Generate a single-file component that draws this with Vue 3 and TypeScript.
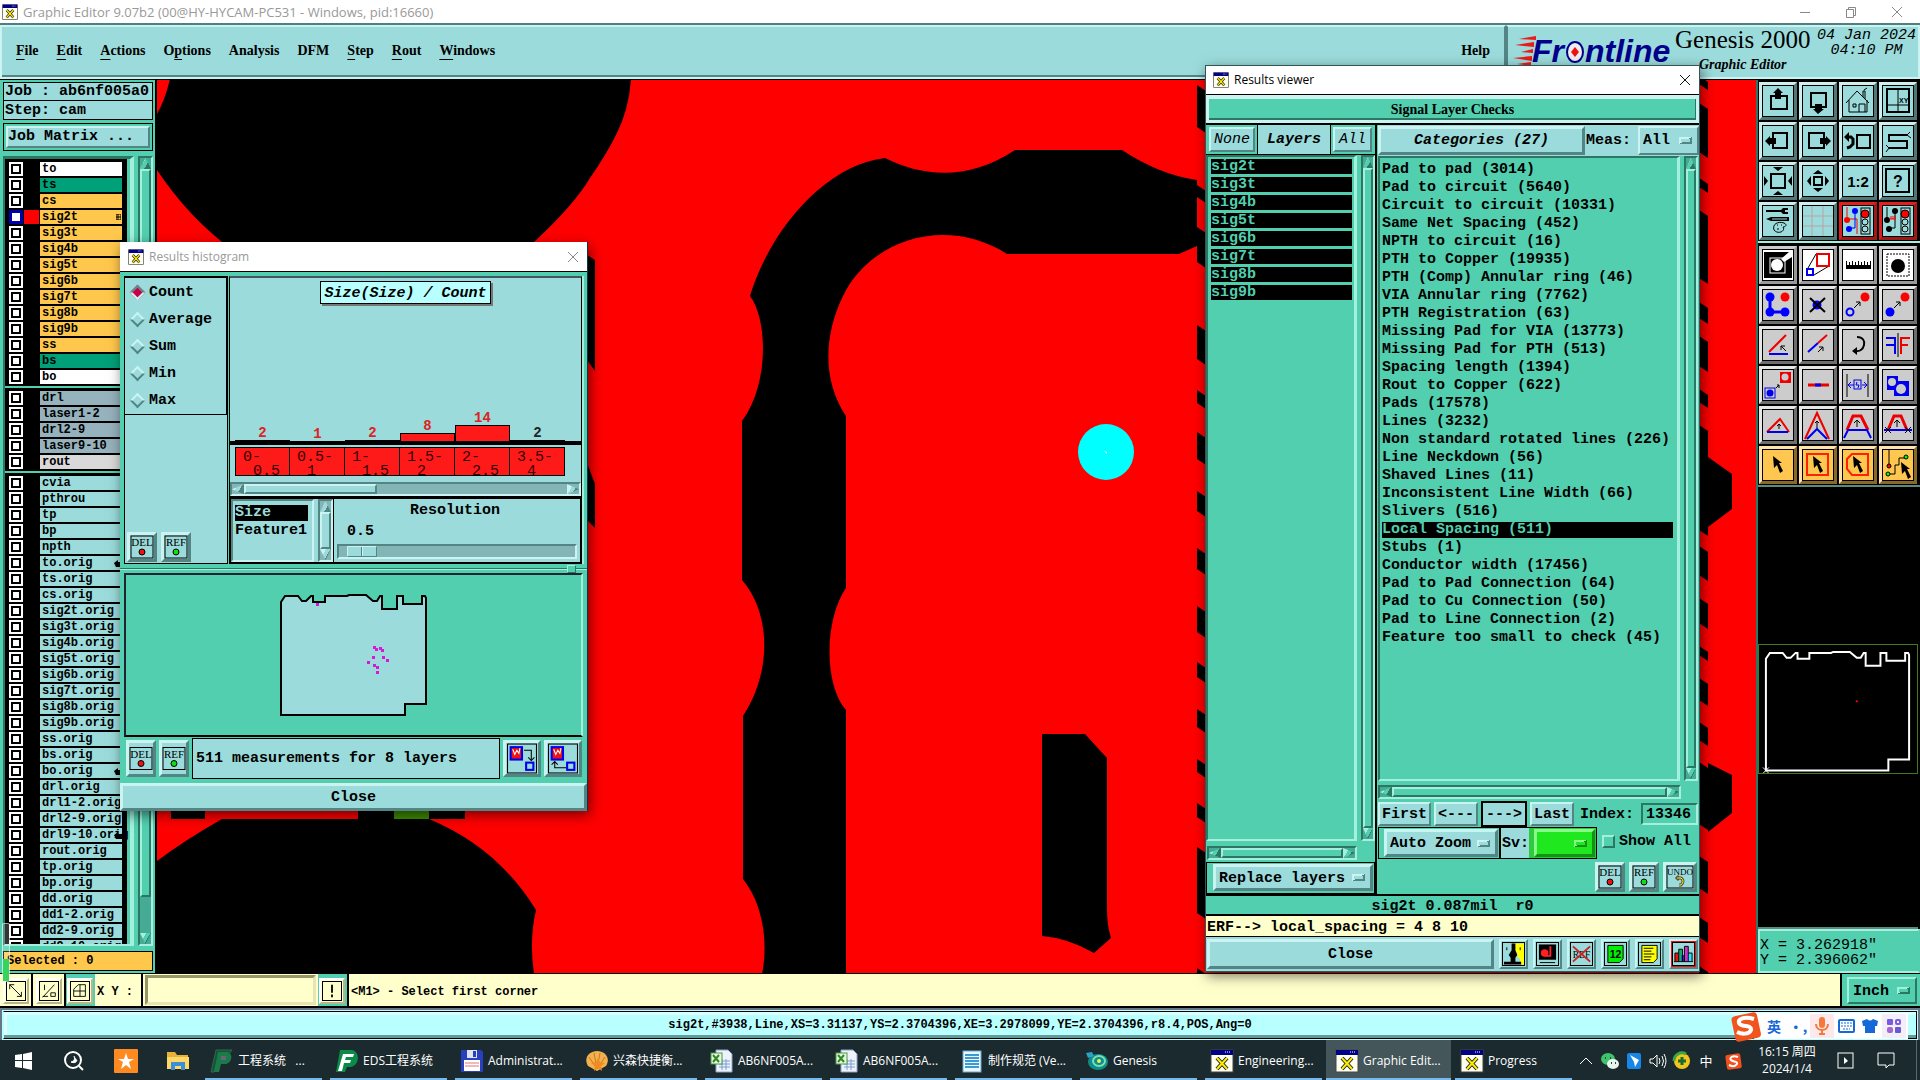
<script setup lang="ts">
import { ref } from 'vue'

interface Layer { name: string; kind: string }
interface Tool { label: string; tone: string; art: string }
interface Task { label: string; icon: string; active?: boolean }

const menus: [string, string, string][] = [
  ['', 'F', 'ile'], ['', 'E', 'dit'], ['', 'A', 'ctions'], ['O', 'p', 'tions'],
  ['Analysis', '', ''], ['DFM', '', ''], ['', 'S', 'tep'], ['', 'R', 'out'], ['', 'W', 'indows'],
]

const layer = (kind: string, names: string): Layer[] => names.split(' ').map(name => ({ name, kind }))
const groups: Layer[][] = [
  [
    ...layer('silk', 'to'), ...layer('mask', 'ts'), ...layer('sig', 'cs sig2t sig3t sig4b sig5t sig6b sig7t sig8b sig9b ss'),
    ...layer('mask', 'bs'), ...layer('silk', 'bo'),
  ],
  [...layer('drill', 'drl laser1-2 drl2-9 laser9-10'), ...layer('rout', 'rout')],
  layer('misc', 'cvia pthrou tp bp npth to.orig ts.orig cs.orig sig2t.orig sig3t.orig sig4b.orig sig5t.orig sig6b.orig sig7t.orig sig8b.orig sig9b.orig ss.orig bs.orig bo.orig drl.orig drl1-2.orig drl2-9.orig drl9-10.orig rout.orig tp.orig bp.orig dd.orig dd1-2.orig dd2-9.orig dd9-10.orig'),
]
const pointed = ['to.orig', 'bo.orig', 'drl9-10.orig']

const resultLayers = ['sig2t', 'sig3t', 'sig4b', 'sig5t', 'sig6b', 'sig7t', 'sig8b', 'sig9b']
const categories = [
  'Pad to pad (3014)', 'Pad to circuit (5640)', 'Circuit to circuit (10331)', 'Same Net Spacing (452)', 'NPTH to circuit (16)',
  'PTH to Copper (19935)', 'PTH (Comp) Annular ring (46)', 'VIA Annular ring (7762)', 'PTH Registration (63)',
  'Missing Pad for VIA (13773)', 'Missing Pad for PTH (513)', 'Spacing length (1394)', 'Rout to Copper (622)', 'Pads (17578)',
  'Lines (3232)', 'Non standard rotated lines (226)', 'Line Neckdown (56)', 'Shaved Lines (11)', 'Inconsistent Line Width (66)',
  'Slivers (516)', 'Local Spacing (511)', 'Stubs (1)', 'Conductor width (17456)', 'Pad to Pad Connection (64)',
  'Pad to Cu Connection (50)', 'Pad to Line Connection (2)', 'Feature too small to check (45)',
]
const category = ref('Local Spacing (511)')
const measurement = 'sig2t 0.087mil  r0'

const modes = ['Count', 'Average', 'Sum', 'Min', 'Max']
const mode = ref('Count')
const bins = [
  { from: '0-', to: '0.5', n: 2, h: 1 }, { from: '0.5-', to: '1', n: 1, h: 0 }, { from: '1-', to: '1.5', n: 2, h: 1 },
  { from: '1.5-', to: '2', n: 8, h: 8 }, { from: '2-', to: '2.5', n: 14, h: 16 }, { from: '3.5-', to: '4', n: 2, h: 1, dark: true },
]
const resolution = ref(0)
const index = ref('13346')
const coords = ref('')
const showAll = ref(false)

const board = 'M1 8L5 2H18L22 7H26L31 2H33V8H45V2H67L69 1H86L93 7H97L100 2H102V15H117V2H123V10H142V2H145L146 4V110H125V121H1Z'
const spots = [[37, 10], [94, 53], [96, 55], [100, 54], [102, 56], [93, 63], [103, 63], [107, 66], [88, 68], [94, 71], [97, 73], [97, 78]]

const notch = (x: number, w: number, a: number, b: number) => `M${x} ${a}L${x + w} ${a + 6}V${b + 6}L${x} ${b}Z`
const leftNotches = [[85, 127], [185, 197], [227, 262], [325, 359], [390, 403], [432, 459], [491, 511], [548, 569], [606, 632], [662, 677], [709, 727], [759, 772], [803, 817], [847, 913], [968, 974]]
  .map(([a, b]) => notch(1197, 9, a, b)).join('')
const rightNotches = [[76, 84], [103, 152], [178, 187], [210, 278], [302, 318], [336, 366], [389, 402], [425, 530], [546, 575], [598, 623], [646, 655], [678, 700], [722, 740], [762, 824], [856, 888], [917, 937], [966, 974]]
  .map(([a, b]) => notch(1699, 9, a, b)).join('')

const light = '<rect x="18" y="2" width="9" height="26" fill="none" stroke="#000"/><circle cx="22" cy="8" r="4" fill="#f00" stroke="#000"/><circle cx="22" cy="16" r="3" fill="none" stroke="#000"/><circle cx="22" cy="23" r="3" fill="none" stroke="#000"/>'
const cursor = (x: number, y: number) => `<path transform="translate(${x} ${y})" d="M0 0L9 7H6L10 15L7 17L4 9L1 12Z"/>`
const tools: Tool[] = [
  { label: 'Pan up', tone: 'cy', art: '<rect x="8" y="10" width="16" height="13" fill="none" stroke="#000" stroke-width="2"/><path d="M15 2L20 7H18V13H12V7H10Z"/>' },
  { label: 'Pan down', tone: 'cy', art: '<rect x="8" y="7" width="15" height="14" fill="none" stroke="#000" stroke-width="2"/><path d="M15 28L10 23H12V18H19V23H21Z"/>' },
  { label: 'Home', tone: 'cy', art: '<path d="M3 17L14 5L26 17M6 14V26H24V14M20 11V5H22V13M21 4L24 2M16 26V18H22V26M10 18H13V21H10Z" fill="none" stroke="#000"/>' },
  { label: 'Window XY', tone: 'cy', art: '<rect x="4" y="3" width="22" height="23" fill="none" stroke="#000" stroke-width="2"/><path d="M15 3V26M4 19H26" stroke="#000"/><text x="16" y="17" font-size="7" font-family="Liberation Sans">XY</text>' },
  { label: 'Pan left', tone: 'cy', art: '<rect x="10" y="7" width="14" height="15" fill="none" stroke="#000" stroke-width="2"/><path d="M2 15L7 10V12H13V18H7V20Z"/>' },
  { label: 'Pan right', tone: 'cy', art: '<rect x="6" y="7" width="15" height="15" fill="none" stroke="#000" stroke-width="2"/><path d="M28 15L23 10V12H17V18H23V20Z"/>' },
  { label: 'Previous view', tone: 'cy', art: '<rect x="14" y="9" width="13" height="13" fill="none" stroke="#000" stroke-width="2"/><path d="M3 11H8L10 13V18L7 21L4 22" fill="none" stroke="#000" stroke-width="3"/><path d="M1 11L6 6V16Z"/>' },
  { label: 'Snake', tone: 'cy', art: '<path d="M24 9H6V15H24V22H6" fill="none" stroke="#000" stroke-width="2"/><path d="M24 9L27 6M24 9L28 12M6 22L3 19M6 22L3 26" stroke="#000"/>' },
  { label: 'Zoom out', tone: 'cy', art: '<rect x="8" y="8" width="14" height="14" fill="none" stroke="#000" stroke-width="2"/><path d="M10 1H20L15 5ZM10 29H20L15 25ZM1 10V20L5 15ZM29 10V20L25 15Z"/>' },
  { label: 'Zoom in', tone: 'cy', art: '<rect x="11" y="11" width="8" height="8" fill="none" stroke="#000" stroke-width="2"/><path d="M10 8H20L15 4ZM10 22H20L15 26ZM8 10V20L4 15ZM22 10V20L26 15Z"/>' },
  { label: 'Scale', tone: 'cy', art: '<text x="15" y="21" text-anchor="middle" font-size="15" font-weight="700" font-family="Liberation Sans">1:2</text>' },
  { label: 'Query', tone: 'cy', art: '<rect x="3" y="3" width="23" height="23" fill="none" stroke="#000" stroke-width="2"/><text x="15" y="21" text-anchor="middle" font-size="16" font-weight="700" font-family="Liberation Sans">?</text>' },
  { label: 'Setup', tone: 'cy', art: '<path d="M3 4H18L20 2H25V4H22V6H25V8H20L18 6H3ZM3 13L8 11H26V15H8Z" fill="#000"/><path d="M9 13H24" stroke="#9bdbdb"/><path d="M11 24C9 18 15 15 21 17C25 19 22 21 20 21C23 25 15 29 11 24Z" fill="none" stroke="#000"/><path d="M14 19H15M18 19H19M14 23H16" stroke="#000"/>' },
  { label: 'Grid', tone: 'cy', art: '<path d="M9 0V30M20 0V30M0 10H30M0 20H30" stroke="#b9a3a3"/>' },
  { label: 'Net highlight', tone: 'red', art: '<path d="M4 1V13H14V28" fill="none" stroke="#f00"/><circle cx="4" cy="14" r="3" fill="#f00"/><path d="M12 5V22H6" fill="none" stroke="#00f"/><circle cx="12" cy="5" r="3" fill="#00f"/><circle cx="6" cy="23" r="3" fill="#00f"/>' + light },
  { label: 'Net spacing', tone: 'red', art: '<path d="M4 1V14M12 5V22H6" fill="none" stroke="#000"/><circle cx="4" cy="14" r="3"/><circle cx="12" cy="5" r="3"/><circle cx="6" cy="23" r="3"/><path d="M6 13H13M8 10V13M10 10V13M12 10V13" stroke="#f00"/>' + light },
  { label: 'Feature fill', tone: 'wh', art: '<rect x="1" y="2" width="28" height="26"/><rect x="7" y="8" width="15" height="15" fill="none" stroke="#fff"/><circle cx="14" cy="15" r="6" fill="#fff"/><path d="M18 9L26 2H29V7L21 12Z" fill="#fff"/>' },
  { label: 'Area link', tone: 'wh', art: '<path d="M5 18L13 4M11 25L26 16" stroke="#000"/><rect x="14" y="4" width="12" height="12" fill="#fff" stroke="#e00" stroke-width="2"/><rect x="4" y="19" width="6" height="6" fill="#fff" stroke="#00e" stroke-width="2"/>' },
  { label: 'Measure', tone: 'wh', art: '<path d="M3 19V11H4V15H6V12H7V15H9V11H10V15H12V12H13V15H15V11H16V15H18V12H19V15H21V11H22V15H24V12H25V15H27V11H28V19Z"/>' },
  { label: 'Select pad', tone: 'wh', art: '<rect x="4" y="4" width="22" height="22" fill="none" stroke="#000" stroke-dasharray="2 1"/><circle cx="15" cy="16" r="7"/>' },
  { label: 'Add polyline', tone: 'gr', art: '<path d="M7 7V22H22" fill="none" stroke="#00f" stroke-width="3"/><circle cx="7" cy="7" r="4.500" fill="#00f"/><circle cx="7" cy="22" r="4.500" fill="#00f"/><circle cx="22" cy="22" r="4.500" fill="#00f"/><circle cx="22" cy="7" r="4.500" fill="#f00"/>' },
  { label: 'Delete', tone: 'gr', art: '<circle cx="14" cy="15" r="4.500" fill="#00f"/><path d="M7 8L22 22M22 8L7 22" stroke="#000" stroke-width="2"/>' },
  { label: 'Move', tone: 'gr', art: '<circle cx="22" cy="7" r="4.500" fill="#f00"/><circle cx="7" cy="22" r="3.500" fill="none" stroke="#00f" stroke-width="2"/><path d="M11 18L17 12M13 12H17V16" fill="none" stroke="#000"/>' },
  { label: 'Copy', tone: 'gr', art: '<circle cx="22" cy="7" r="4.500" fill="#f00"/><circle cx="7" cy="22" r="4.500" fill="#00f"/><path d="M11 18L17 12M13 12H17V16" fill="none" stroke="#000"/>' },
  { label: 'Angle', tone: 'gr', art: '<path d="M6 22L23 5" stroke="#e00" stroke-width="2"/><path d="M6 24H25" stroke="#00e" stroke-width="2"/><path d="M23 21L18 16M18 20V16H22" fill="none" stroke="#000"/>' },
  { label: 'Stretch', tone: 'gr', art: '<path d="M5 22L15 13" stroke="#00e" stroke-width="2"/><path d="M15 13L24 5" stroke="#e00" stroke-width="2"/><path d="M15 22L20 17M16 17H20V21" fill="none" stroke="#000"/>' },
  { label: 'Rotate', tone: 'gr', art: '<path d="M14 7C20 7 22 11 21 15C20 20 16 22 11 21" fill="none" stroke="#000" stroke-width="2"/><path d="M9 21L14 17V25Z"/>' },
  { label: 'Mirror', tone: 'gr', art: '<path d="M3 8H12V24M3 15H12" fill="none" stroke="#00e" stroke-width="2"/><path d="M27 8H18V24M18 15H25" fill="none" stroke="#e00" stroke-width="2"/><path d="M15 3V27" stroke="#000"/>' },
  { label: 'Substitute', tone: 'gr', art: '<rect x="17" y="2" width="11" height="11" fill="#e00"/><circle cx="22" cy="7" r="3.500" fill="#ccc"/><rect x="2" y="18" width="10" height="10" fill="none" stroke="#00e"/><circle cx="7" cy="23" r="3.500" fill="#00e"/><path d="M13 18L16 15M14 15H16V18" fill="none" stroke="#000"/>' },
  { label: 'Merge lines', tone: 'gr', art: '<path d="M5 15H26" stroke="#e00" stroke-width="3"/><path d="M12 15H18" stroke="#00e" stroke-width="3"/>' },
  { label: 'Gap', tone: 'gr', art: '<path d="M4 4V27M25 4V27" stroke="#000"/><path d="M5 15H11M19 15H24M8 12L5 15L8 18M21 12L24 15L21 18" fill="none" stroke="#00e"/><rect x="11" y="10" width="7" height="9" fill="none" stroke="#00e"/><path d="M14 12L13 15H16L15 18" fill="none" stroke="#00e"/>' },
  { label: 'Group', tone: 'gr', art: '<path d="M4 6H15V11H26V26H11V20H4Z" fill="#00e"/><circle cx="9" cy="12" r="4" fill="#ccc"/><circle cx="18" cy="19" r="5" fill="#ccc"/>' },
  { label: 'Triangle', tone: 'gr', art: '<path d="M4 22L17 9L26 22" fill="none" stroke="#e00" stroke-width="2"/><path d="M4 22H25" stroke="#00e" stroke-width="2"/><path d="M16 19V14M14 16L16 14L18 16" fill="none" stroke="#000"/>' },
  { label: 'Peak', tone: 'gr', art: '<path d="M2 29L14 3L26 29" fill="none" stroke="#e00" stroke-width="2"/><path d="M4 29L14 19L24 29" fill="none" stroke="#00e" stroke-width="2"/><path d="M14 18V11M12 13L14 11L16 13" fill="none" stroke="#000"/>' },
  { label: 'Trapezoid', tone: 'gr', art: '<path d="M4 20L10 6H18L25 20" fill="none" stroke="#e00" stroke-width="3"/><path d="M1 28L5 20H24L28 28" fill="none" stroke="#00e" stroke-width="2"/><path d="M14 17V10M11 13L14 10L17 13" fill="none" stroke="#000"/>' },
  { label: 'Trim', tone: 'gr', art: '<path d="M5 20L11 6H18L24 20" fill="none" stroke="#e00" stroke-width="3"/><path d="M1 20H29" stroke="#00e" stroke-width="2"/><path d="M14 17V10M11 13L14 10L17 13M2 17L8 23M8 17L2 23M22 17L28 23M28 17L22 23" fill="none" stroke="#000"/>' },
  { label: 'Select single', tone: 'or', art: cursor(10, 6) },
  { label: 'Select rectangle', tone: 'or', art: '<rect x="4" y="4" width="21" height="21" fill="none" stroke="#f20" stroke-width="2"/>' + cursor(10, 6) },
  { label: 'Select polygon', tone: 'or', art: '<path d="M9 4H25V25H9L4 19V9Z" fill="none" stroke="#f20" stroke-width="2"/>' + cursor(10, 6) },
  { label: 'Select net', tone: 'or', art: '<path d="M6 0V15M6 24H12V15H16V8H22" fill="none" stroke="#000"/><circle cx="6" cy="16" r="2" fill="#f00" stroke="#000"/><circle cx="5" cy="24" r="2" fill="#0f0" stroke="#000"/><circle cx="23" cy="7" r="2" fill="#0f0" stroke="#000"/>' + cursor(18, 12) },
]
const upperTools = tools.slice(0, 16)
const lowerTools = tools.slice(16)

const footTools = [
  { label: 'Profile', art: '<path d="M1 0H9V6L12 10L9 13V16H6V24H1Z" fill="#9bdbdb"/><path d="M12 0H22V22H18V16L15 14V10L12 8Z" fill="#ff0"/><path d="M9 0H13V7L15 12L13 15V19H19V22H1V19H8V15L6 12L9 7Z"/><path d="M4 4V7M18 4V7" stroke="#000"/>' },
  { label: 'Stop', art: '<rect x="2" y="1" width="18" height="16"/><circle cx="8" cy="10" r="4" fill="#f22"/><path d="M14 3V13H8" fill="none" stroke="#f22" stroke-width="2"/><path d="M3 20H19" stroke="#000"/>' },
  { label: 'No reference', art: '<text x="11" y="15" text-anchor="middle" font-size="10" font-weight="400" font-family="Liberation Serif">REF</text><path d="M2 3L20 19M20 3L2 19" stroke="#c22" stroke-width="2"/>' },
  { label: 'Numbers', art: '<path d="M3 2H19V16L15 20H3Z" fill="#0e0" stroke="#000"/><text x="11" y="15" text-anchor="middle" font-size="11" font-weight="700" font-family="Liberation Sans">12</text>' },
  { label: 'Notes', art: '<path d="M3 2H19V16L15 20H3Z" fill="#ff0" stroke="#000"/><path d="M5 5H15M5 8H13M5 11H16M5 14H13M5 17H12" stroke="#000"/>' },
  { label: 'Histogram', art: '<path d="M2 19V10H6V19Z" fill="#e11"/><path d="M6 19V6H10V19Z" fill="#1a6"/><path d="M9 19V12H13V19Z" fill="#22e"/><path d="M12 19V3H16V19Z" fill="#c3c"/><path d="M16 19V10H20V19Z" fill="#3df"/><path d="M1 19H21M2 19V10H6M6 19V6H10V19M12 19V3H16V19M16 10H20V19" stroke="#000" fill="none"/>' },
]

const xIcon = '<rect x="1" y="1" width="22" height="22" fill="#fffff0" stroke="#444"/><rect x="1" y="1" width="22" height="5" fill="#008"/><path d="M15 3H21" stroke="#fff" stroke-dasharray="1 1"/><path d="M7 9L17 20M17 9L7 20" stroke="#222" stroke-width="4"/><path d="M7 9L17 20M17 9L7 20" stroke="#fe0" stroke-width="2"/>'
const sheet = '<path d="M6 1H18L22 5V23H6Z" fill="#eef3fb" stroke="#8aa4cc"/><path d="M9 12H20M9 15H20M9 18H20M12 10V21M16 10V21" stroke="#7d9cd0"/><rect x="1" y="4" width="11" height="11" fill="#e8f5e4" stroke="#4a9a3c"/><path d="M3 6L9 13M9 6L3 13" stroke="#2f8a22" stroke-width="2"/>'
const tasks: Task[] = [
  { label: '工程系统   ...', icon: '<path d="M6 1H22L19 5H9L4 23H1Z" fill="#153" stroke="#365"/><path d="M8 3H17C24 4 22 15 15 15H11L9 23H4Z" fill="#1a7a4a"/><path d="M11 7H16V11H11Z" fill="#667"/>' },
  { label: 'EDS工程系统', icon: '<path d="M5 1H17C26 3 24 17 16 18H12L10 23H1Z" fill="#0c8a48"/><path d="M8 5H19L18 8H11L10 11H16L15 14H9L7 22H3Z" fill="#fff"/>' },
  { label: 'Administrat...', icon: '<path d="M1 1H21L23 3V23H1Z" fill="#2740c0"/><rect x="7" y="1" width="10" height="8" fill="#dfe3ee"/><rect x="13" y="2" width="3" height="6" fill="#2740c0"/><rect x="4" y="11" width="16" height="11" fill="#fff"/><path d="M5 14H19M5 17H19" stroke="#e57373"/>' },
  { label: '兴森快捷衡...', icon: '<path d="M12 22L3 17C-2 8 5 2 12 2C20 2 26 9 21 17Z" fill="#f3b04e"/><path d="M12 20L4 8M12 20L9 4M12 20L15 4M12 20L20 8" stroke="#c9781e"/><path d="M13 9L15 13L20 14L16 17L17 22L13 19L9 22L10 17L6 14L11 13Z" fill="#f08a24"/>' },
  { label: 'AB6NF005A...', icon: sheet },
  { label: 'AB6NF005A...', icon: sheet },
  { label: '制作规范 (Ve...', icon: '<rect x="3" y="2" width="18" height="21" fill="#e9f6fd" stroke="#6aa8cc"/><path d="M5 6H19M5 9H19M5 12H19M5 15H19M5 18H19" stroke="#3b9ad2" stroke-width="2"/>' },
  { label: 'Genesis', icon: '<ellipse cx="13" cy="13" rx="10" ry="8" fill="#0f8c8c"/><ellipse cx="14" cy="12" rx="6" ry="5" fill="none" stroke="#7be0b0" stroke-width="2"/><circle cx="14" cy="12" r="2" fill="#ee5"/><path d="M1 4L7 3L9 7L3 9Z" fill="#29a3c4"/>' },
  { label: 'Engineering...', icon: xIcon },
  { label: 'Graphic Edit...', icon: xIcon, active: true },
  { label: 'Progress', icon: xIcon },
]
</script>

<template>
  <div class="screen">
    <header class="titlebar">
      <svg class="appicon" viewBox="0 0 24 24" v-html="xIcon"></svg>
      <span class="grow">Graphic Editor 9.07b2 (00@HY-HYCAM-PC531 - Windows, pid:16660)</span>
      <button class="wbtn" aria-label="Minimize"><svg width="12" height="12" viewBox="0 0 12 12"><path d="M1 6.500H11" /></svg></button>
      <button class="wbtn" aria-label="Restore"><svg width="12" height="12" viewBox="0 0 12 12"><path d="M1.500 3.500H8.500V11.500H1.500ZM3.500 3.500V1.500H10.500V9.500H8.500" /></svg></button>
      <button class="wbtn" aria-label="Close"><svg width="12" height="12" viewBox="0 0 12 12"><path d="M1 1L11 11M11 1L1 11" /></svg></button>
    </header>

    <div class="topbar">
      <nav class="menubar">
        <button v-for="m in menus" :key="m.join('')" class="menu">{{ m[0] }}<u>{{ m[1] }}</u>{{ m[2] }}</button>
        <span class="grow"></span>
        <button class="menu">Help</button>
      </nav>
      <div class="brand">
        <svg class="logo" width="164" height="40" viewBox="0 0 164 40">
          <path d="M8 9L25 6V10ZM4 15L23 12V17ZM10 22L22 19V23ZM2 28L21 26V31ZM6 34L20 32V36Z" fill="#f01818" />
          <g fill="#00008b" font-family="Liberation Sans" font-size="32" font-weight="700" font-style="italic">
            <text x="21" y="32">Fr</text><text x="74" y="32">ntline</text>
          </g>
          <ellipse cx="64" cy="22" rx="8" ry="10" fill="#eee" stroke="#00008b" stroke-width="2" /><path d="M64 17L68 22L64 27L60 22Z" fill="#e11" />
        </svg>
        <div class="product"><div class="genesis">Genesis 2000</div><div class="editor">Graphic Editor</div></div>
        <div class="date">04 Jan 2024<br>04:10 PM</div>
      </div>
    </div>

    <main class="work">
      <aside class="left">
        <div class="cell">Job : ab6nf005a0</div>
        <div class="cell step">Step: cam</div>
        <div class="matrixbox"><button class="bv matrix">Job Matrix ...</button></div>
        <div class="layerarea">
          <div class="layerlist">
            <div v-for="(g, gi) in groups" :key="gi" class="group">
              <div v-for="l in g" :key="l.name" class="layer" :class="{ cur: l.name === 'sig2t' }">
                <i class="tick"></i><i class="swatch"></i>
                <span class="lname" :class="l.kind">{{ l.name }}</span>
                <svg v-if="pointed.includes(l.name)" class="hand" width="8" height="8" viewBox="0 0 8 8"><path d="M0 3L4 0V2H8V7H2Z" /></svg>
                <svg v-if="l.name === 'sig2t'" class="plus" width="5" height="6" viewBox="0 0 5 6"><path d="M0 0H5V6H0ZM2 0V6M0 3H5" fill="none" stroke="#000" /></svg>
              </div>
            </div>
          </div>
          <div class="vs lvs"><b class="au"></b><i class="th"></i><b class="ad"></b></div>
        </div>
        <div class="selected">Selected : 0</div>
        <div class="gauge"><i></i></div>
      </aside>

      <div class="canvas">
        <svg viewBox="157 80 1599 893" preserveAspectRatio="xMinYMin slice">
          <rect x="157" y="79" width="1800" height="1100" fill="#f00" />
          <path d="M170 79Q165 100 157 114V170Q185 212 222 242H534Q574 205 590 178Q606 155 616 135Q629 110 631 79Z" />
          <path d="M587 255L595 260V371L587 360ZM587 463L595 484V528L587 520Z" />
          <path d="M885 158C825 165 770 230 750 296C768 320 769 385 742 421V580C770 612 773 670 743 716V879C764 905 768 945 762 974H846V710C824 685 824 620 846 588V416C822 380 824 335 843 296C870 240 945 215 1007 254H1179L1197 246V180Q1160 175 1122 150H1015C970 180 925 178 885 158Z" />
          <circle cx="1106" cy="452" r="28" fill="#0ff" /><path d="M1104 451L1107 452V454Z" fill="#fff" />
          <path d="M1042 734H1085L1107 758V910Q1107 925 1111 938L1094 953Q1068 938 1042 936Z" />
          <path :d="leftNotches" /><path :d="rightNotches" />
          <path d="M1708 457L1732 474V509L1708 527ZM1708 763L1732 775V813L1708 832Z" />
          <path d="M171 811H205V819H171ZM358 811H465V819H358Z" /><path d="M394 811H429V819H394Z" fill="#3e8c00" />
          <path d="M157 861Q185 840 222 819H429C475 838 510 868 536 910Q529 940 534 974H157Z" />
        </svg>
      </div>

      <aside class="right">
        <div class="tools"><button v-for="t in upperTools" :key="t.label" class="tool" :class="t.tone" :aria-label="t.label"><svg viewBox="0 0 30 30" v-html="t.art"></svg></button></div>
        <div class="tools low"><button v-for="t in lowerTools" :key="t.label" class="tool" :class="t.tone" :aria-label="t.label"><svg viewBox="0 0 30 30" v-html="t.art"></svg></button></div>
        <div class="overview">
          <svg viewBox="0 0 160 130"><path :d="board" transform="translate(6 6)" fill="none" stroke="#fff" stroke-width="2" /><rect x="98" y="56" width="2" height="2" fill="#f00" /><path d="M4 124L10 130M10 124L4 130" stroke="#fff" /></svg>
        </div>
        <div class="xy">X = 3.262918"<br>Y = 2.396062"</div>
      </aside>
    </main>

    <div class="cmdbar">
      <button class="cmd" aria-label="Line"><svg viewBox="0 0 20 20"><path d="M3 3L16 16M3 8V3H8M16 11V16H11" /></svg></button>
      <button class="cmd" aria-label="Ratio"><svg viewBox="0 0 20 20"><path d="M3 17L16 3M5 3V9M3 16H9M12 12H17V16H12Z" /></svg></button>
      <button class="cmd teal" aria-label="Grid snap"><svg viewBox="0 0 20 20"><path d="M3 8L8 3H16V16H3ZM10 3V16M3 10H16" /></svg></button>
      <label class="xylabel" for="coords">X Y :</label>
      <input id="coords" v-model="coords" class="coords">
      <button class="cmd teal" aria-label="Execute"><svg viewBox="0 0 20 20"><path d="M10 3V12M10 14V17" stroke-width="2" /></svg></button>
      <span class="prompt grow">&lt;M1&gt; - Select first corner</span>
      <div class="unitbox"><select class="bv opt tealopt" aria-label="Units"><option>Inch</option></select></div>
    </div>

    <div class="status"><div>sig2t,#3938,Line,XS=3.31137,YS=2.3704396,XE=3.2978099,YE=2.3704396,r8.4,POS,Ang=0</div></div>

    <footer class="taskbar">
      <button class="tb" aria-label="Start"><svg width="18" height="18" viewBox="0 0 18 18" fill="#fff"><path d="M0 3L7 2V8H0ZM8 2L17 0V8H8ZM0 9H7V16L0 15ZM8 9H17V18L8 16Z" /></svg></button>
      <button class="tb" aria-label="Search"><svg width="22" height="22" viewBox="0 0 22 22" fill="none" stroke="#fff" stroke-width="2"><circle cx="10" cy="10" r="8" /><path d="M11 6Q13 11 8 12Q13 14 14 10" stroke-width="1" fill="#fff" /><path d="M16 16L20 20" /></svg></button>
      <button class="tb" aria-label="Favorites"><svg width="24" height="24" viewBox="0 0 24 24"><rect width="24" height="24" rx="1" fill="#ff8a22" /><path d="M12 4L14 10H20L15 13L17 20L12 16L7 20L9 13L4 10H10Z" fill="#fff" /></svg></button>
      <button class="tb" aria-label="Files"><svg width="24" height="20" viewBox="0 0 24 20"><path d="M1 1H9L11 4H22V18H1Z" fill="#e8b23a" /><path d="M1 6H23V18H1Z" fill="#ffd766" /><path d="M5 19V11H19V19H15V15H9V19Z" fill="#3a8fd6" /></svg></button>
      <div class="tasks">
        <button v-for="(t, i) in tasks" :key="i" class="task" :class="{ active: t.active }"><svg width="24" height="24" viewBox="0 0 24 24" v-html="t.icon"></svg><span>{{ t.label }}</span></button>
      </div>
      <div class="tray">
        <svg viewBox="0 0 20 20"><path d="M4 13L10 7L16 13" fill="none" stroke="#fff" /></svg>
        <svg viewBox="0 0 20 20"><ellipse cx="8" cy="8" rx="7" ry="6" fill="#3fc36b" /><ellipse cx="13" cy="13" rx="6" ry="5" fill="#e8f5ea" /><path d="M5 7H6M10 7H11M11 12H12M15 12H16" stroke="#245" stroke-width="2" /></svg>
        <svg viewBox="0 0 20 20"><rect x="3" y="2" width="14" height="16" rx="2" fill="#1687e8" /><path d="M6 4L15 9L11 16L10 11Z" fill="#fff" /></svg>
        <svg viewBox="0 0 20 20"><path d="M2 8H5L9 4V16L5 12H2ZM11 7Q13 10 11 13M14 5Q17 10 14 15M16 3Q20 10 16 17" fill="none" stroke="#fff" /></svg>
        <svg viewBox="0 0 20 20"><circle cx="10" cy="10" r="8" fill="#f4c51c" /><path d="M2 10A8 8 0 0 1 14 3" fill="none" stroke="#3aa64a" stroke-width="3" /><path d="M10 6V14M6 10H14" stroke="#176b2c" stroke-width="3" /></svg>
        <span class="ime">中</span>
        <svg class="sg" viewBox="0 0 20 20"><rect x="2" y="3" width="15" height="15" rx="2" fill="#f2501e" transform="rotate(-8 10 10)" /><path d="M14 6C8 4 5 7 7 9C9 11 14 10 13 13C11 16 7 15 5 14" fill="none" stroke="#fff" stroke-width="2" /></svg>
      </div>
      <div class="clock">16:15 周四<br>2024/1/4</div>
      <svg class="tico" viewBox="0 0 20 20"><rect x="2" y="3" width="15" height="15" fill="none" stroke="#fff" /><path d="M8 7L12 11L8 14Z" fill="#fff" /></svg>
      <svg class="tico" viewBox="0 0 20 20"><path d="M2 3H18V15H13L10 18V15H2Z" fill="none" stroke="#fff" /></svg>
      <i class="edge"></i>
    </footer>

    <div class="sogou">
      <svg width="32" height="32" viewBox="0 0 32 32"><rect x="3" y="4" width="26" height="26" rx="4" fill="#f2541f" transform="rotate(-12 16 16)" /><path d="M24 9C14 6 8 9 9 13C11 18 22 14 21 20C19 25 11 24 7 22" fill="none" stroke="#fff" stroke-width="4" /></svg>
      <span>英</span><span>•,</span>
      <svg width="24" height="24" viewBox="0 0 24 24"><rect width="24" height="24" fill="#fde9ec" /><rect x="9" y="3" width="6" height="11" rx="3" fill="#f47a3c" /><path d="M6 10C6 18 18 18 18 10M12 16V20M9 20H15" fill="none" stroke="#f47a3c" stroke-width="2" /></svg>
      <svg width="24" height="24" viewBox="0 0 24 24"><rect x="5" y="6" width="15" height="12" rx="1" fill="none" stroke="#1468d8" stroke-width="2" /><path d="M7 9H18M7 12H18M9 15H16" stroke="#1468d8" stroke-dasharray="2 1" /></svg>
      <svg width="24" height="24" viewBox="0 0 24 24"><path d="M4 7L9 5Q12 8 15 5L20 7L19 12H17V19H7V12H5Z" fill="#1468d8" /></svg>
      <svg width="24" height="24" viewBox="0 0 24 24"><rect width="24" height="24" fill="#f3eef8" /><rect x="5" y="5" width="6" height="6" rx="1" fill="#7a5ae0" /><rect x="14" y="6" width="4" height="4" rx="1" fill="none" stroke="#7a5ae0" stroke-width="2" /><rect x="5" y="13" width="6" height="6" rx="2" fill="#a06ad0" /><rect x="13" y="13" width="6" height="6" rx="1" fill="#6a5ad0" /></svg>
    </div>

    <section class="win hist">
      <header class="wtitle dim"><svg class="appicon" viewBox="0 0 24 24" v-html="xIcon"></svg><span class="grow">Results histogram</span><button class="wx" aria-label="Close window"><svg width="12" height="12" viewBox="0 0 12 12"><path d="M1 1L11 11M11 1L1 11" /></svg></button></header>
      <div class="hbody">
        <div class="hleft">
          <div class="radios">
            <label v-for="m in modes" :key="m"><input v-model="mode" type="radio" name="mode" :value="m">{{ m }}</label>
          </div>
          <span class="grow"></span>
          <div class="pair">
            <button class="bv sm" aria-label="DEL"><svg viewBox="0 0 24 24"><rect x="1" y="1" width="22" height="22" /><text x="12" y="11">DEL</text><circle cx="12" cy="17" r="3" fill="#e11" /></svg></button>
            <button class="bv sm" aria-label="REF"><svg viewBox="0 0 24 24"><rect x="1" y="1" width="22" height="22" /><text x="12" y="11">REF</text><circle cx="12" cy="17" r="3" fill="#1d1" /></svg></button>
          </div>
        </div>
        <div class="hright">
          <div class="chart">
            <div class="ctitle">Size(Size) / Count</div>
            <span class="grow"></span>
            <div class="bars">
              <div v-for="b in bins" :key="b.from" class="bar" :class="{ dk: b.dark }"><span>{{ b.n }}</span><i :class="{ flat: b.h < 2 }" :style="{ height: b.h + 'px' }"></i></div>
            </div>
            <div class="bins"><div v-for="b in bins" :key="b.from">{{ b.from }}<br><span>{{ b.to }}</span></div></div>
            <div class="hs hhs"><b class="al"></b><i class="th"></i><b class="ar"></b></div>
          </div>
          <div class="hlow">
            <ul class="flist"><li class="on">Size</li><li>Feature1</li></ul>
            <div class="vs cyv"><b class="au"></b><i class="th"></i><b class="ad"></b></div>
            <div class="res">
              <label for="res">Resolution</label><output>0.5</output>
              <input id="res" v-model="resolution" type="range" min="0" max="100">
            </div>
          </div>
        </div>
      </div>
      <div class="sash"><i></i></div>
      <div class="map"><svg width="148" height="124" viewBox="0 0 148 124"><path :d="board" fill="#9bdbdb" stroke="#000" stroke-width="2" /><rect v-for="(s, i) in spots" :key="i" :x="s[0] - 1" :y="s[1] - 1" width="3" height="3" fill="#d818d8" /></svg></div>
      <div class="mrow">
        <button class="bv sm" aria-label="DEL"><svg viewBox="0 0 24 24"><rect x="1" y="1" width="22" height="22" /><text x="12" y="11">DEL</text><circle cx="12" cy="17" r="3" fill="#e11" /></svg></button>
        <button class="bv sm" aria-label="REF"><svg viewBox="0 0 24 24"><rect x="1" y="1" width="22" height="22" /><text x="12" y="11">REF</text><circle cx="12" cy="17" r="3" fill="#1d1" /></svg></button>
        <div class="mtext">511 measurements for 8 layers</div>
        <button class="bv md" aria-label="Export"><svg viewBox="0 0 30 30"><rect x="1" y="1" width="28" height="28" /><rect x="4" y="4" width="11" height="12" fill="#e11" stroke="#00e" stroke-width="2" /><path d="M6 6L8 11L10 7L12 10L13 5" stroke="#fff" fill="none" /><path d="M17 7H24V16M21 14L24 17L27 14" fill="none" stroke="#000" /><rect x="19" y="19" width="7" height="7" fill="none" stroke="#00e" stroke-width="2" /></svg></button>
        <button class="bv md" aria-label="Import"><svg viewBox="0 0 30 30"><rect x="1" y="1" width="28" height="28" /><rect x="4" y="4" width="11" height="12" fill="#e11" stroke="#00e" stroke-width="2" /><path d="M6 6L8 11L10 7L12 10L13 5" stroke="#fff" fill="none" /><path d="M18 24H7V18M4 21L7 18L10 21" fill="none" stroke="#000" /><rect x="19" y="19" width="7" height="7" fill="none" stroke="#00e" stroke-width="2" /></svg></button>
      </div>
      <button class="bv hclose">Close</button>
    </section>

    <section class="win viewer">
      <header class="wtitle"><svg class="appicon" viewBox="0 0 24 24" v-html="xIcon"></svg><span class="grow">Results viewer</span><button class="wx" aria-label="Close window"><svg width="12" height="12" viewBox="0 0 12 12"><path d="M1 1L11 11M11 1L1 11" /></svg></button></header>
      <div class="vhead">Signal Layer Checks</div>
      <div class="vcols">
        <div class="vl">
          <div class="vlh"><button class="bv it">None</button><div class="lay">Layers</div><button class="bv it">All</button></div>
          <div class="lists">
            <ul class="vlist"><li v-for="l in resultLayers" :key="l">{{ l }}</li></ul>
            <div class="vs"><b class="au"></b><i class="th"></i><b class="ad"></b></div>
          </div>
          <div class="hs lhs"><b class="al"></b><i class="th"></i><b class="ar"></b></div>
          <div class="repl"><select class="bv opt" aria-label="Layer action"><option>Replace layers</option></select></div>
        </div>
        <div class="vr">
          <div class="vrh"><button class="bv cat">Categories (27)</button><label for="meas">Meas:</label><select id="meas" class="bv opt meas"><option>All</option></select></div>
          <div class="lists rl">
            <ul class="clist"><li v-for="c in categories" :key="c" :class="{ on: c === category }" @click="category = c">{{ c }}</li></ul>
            <div class="vs"><b class="au"></b><i class="th"></i><b class="ad"></b></div>
          </div>
          <div class="hs rhs"><b class="al"></b><i class="th"></i><b class="ar"></b></div>
          <div class="nav">
            <button class="bv">First</button><button class="bv">&lt;---</button><button class="bv def">---&gt;</button><button class="bv">Last</button>
            <label for="idx">Index:</label><input id="idx" v-model="index">
          </div>
          <div class="zoomrow">
            <div class="zbox"><select class="bv opt" aria-label="Zoom mode"><option>Auto Zoom</option></select></div>
            <label class="sv" for="sv">Sv:</label><div class="gbox"><select id="sv" class="bv opt green"><option></option></select></div>
            <label class="chk"><input v-model="showAll" type="checkbox">Show All</label>
          </div>
          <div class="acts">
            <button class="bv sm" aria-label="DEL"><svg viewBox="0 0 24 24"><rect x="1" y="1" width="22" height="22" /><text x="12" y="11">DEL</text><circle cx="12" cy="17" r="3" fill="#e11" /></svg></button>
            <button class="bv sm" aria-label="REF"><svg viewBox="0 0 24 24"><rect x="1" y="1" width="22" height="22" /><text x="12" y="11">REF</text><circle cx="12" cy="17" r="3" fill="#1d1" /></svg></button>
            <button class="bv sm undo" aria-label="UNDO"><svg viewBox="0 0 28 24"><rect x="1" y="1" width="26" height="22" /><text x="14" y="10">UNDO</text><path d="M11 13H15Q19 16 15 20H13M13 11L11 13L13 15" fill="none" stroke="#553" stroke-width="3" /><path d="M11 13H15Q19 16 15 20H13" fill="none" stroke="#fe3" /></svg></button>
          </div>
        </div>
      </div>
      <div class="meas-line">{{ measurement }}</div>
      <div class="erf">ERF--&gt; local_spacing = 4 8 10</div>
      <div class="vfoot">
        <button class="bv vclose">Close</button>
        <button v-for="f in footTools" :key="f.label" class="bv ft" :class="{ hot: f.label === 'Histogram' }" :aria-label="f.label"><svg viewBox="0 0 22 22" v-html="f.art"></svg></button>
      </div>
    </section>
  </div>
</template>

<style>
html, body { margin: 0; background: #000; overflow: hidden; }
</style>

<style scoped>
* { box-sizing: border-box; }
.screen {
  --cy: #9bdbdb; --cl: #caf3f2; --cd: #538585;
  --te: #52cfaf; --tl: #a4efdd; --td: #2c7763;
  position: relative; height: 100vh; min-height: 900px; display: flex; flex-direction: column; color: #000;
  font: 700 15px/18px "Liberation Mono", monospace; white-space: pre;
}
button, select, input { font: inherit; color: inherit; padding: 0; margin: 0; border: 0; border-radius: 0; background: none; appearance: none; outline: 0; }
ul { list-style: none; margin: 0; padding: 0; }
svg { display: block; }
.grow { flex: 1; }
.bv { background: var(--cy); border: 3px solid; border-color: var(--cl) var(--cd) var(--cd) var(--cl); white-space: pre; text-align: center; }
.opt {
  text-align: left; padding: 2px 20px 0 3px;
  background: linear-gradient(var(--cy), var(--cy)) right 7px center / 9px 3px no-repeat,
    linear-gradient(150deg, var(--cl) 50%, var(--cd) 50%) right 5px center / 13px 7px no-repeat, var(--cy);
}
.tealopt { --cy: #52cfaf; --cl: #a4efdd; --cd: #2c7763; }

.titlebar { height: 23px; display: flex; align-items: center; background: #fff; color: #999; font: 13px/16px "Open Sans", sans-serif; padding-left: 2px; }
.appicon { width: 16px; height: 16px; margin-right: 5px; }
.wbtn { width: 46px; height: 23px; display: flex; justify-content: center; align-items: center; }
.wbtn path { fill: none; stroke: #888; }

.topbar { height: 57px; display: flex; border-top: 2px solid #4f7f7f; border-bottom: 1px solid #000; }
.menubar { flex: 1; display: flex; align-items: center; background: var(--cy); border: 2px solid; border-color: var(--cl) var(--cd) var(--cl) var(--cl); padding: 0 14px 2px 14px; gap: 18px; box-shadow: inset 0 -2px var(--cd); }
.menu { font: 700 14px/18px "Liberation Serif", serif; }
.menu u { text-underline-offset: 4px; }
.brand { width: 414px; display: flex; align-items: flex-start; background: var(--cy); border: 2px solid; border-color: var(--cl) var(--cl) var(--cl) var(--cd); padding: 1px 2px 0 3px; }
.logo { margin-top: 2px; flex: none; }
.product { font-family: "Liberation Serif", serif; flex: 1; }
.genesis { font-size: 25px; line-height: 24px; font-weight: 400; }
.editor { font-size: 14px; line-height: 16px; font-style: italic; padding-left: 24px; margin-top: 5px; }
.date { font-style: italic; line-height: 15px; text-align: center; font-weight: 400; }

.work { flex: 1; min-height: 0; display: flex; background: #000; }
.left { width: 155px; margin-right: 2px; background: var(--te); display: flex; flex-direction: column; padding: 2px 2px 2px 3px; position: relative; }
.cell { border: 1px solid #000; background: var(--cy); height: 19px; line-height: 18px; padding-left: 1px; overflow: hidden; }
.step { border-top-width: 0; line-height: 20px; }
.matrixbox { border: 1px solid #000; margin-top: 3px; height: 28px; padding: 2px; display: flex; }
.matrix { flex: 1; text-align: left; border-width: 2px; }
.layerarea { flex: 1; min-height: 0; margin-top: 5px; display: flex; justify-content: space-between; }
.layerlist { width: 131px; overflow: hidden; border-style: solid; border-width: 3px 4px 2px 2px; border-color: var(--td) var(--tl) var(--tl) var(--td); padding-right: 3px; }
.group { background: #000; padding: 2px 5px 0 3px; margin-bottom: 2px; border-bottom: 1px solid #000; }
.layer { height: 16px; display: flex; align-items: center; position: relative; }
.tick { width: 14px; height: 14px; background: #fff; border: 2px solid #fff; box-shadow: inset 0 0 0 2px #000; flex: none; margin-left: 1px; }
.swatch { width: 15px; height: 14px; margin: 0 1px 0 1px; flex: none; }
.cur .tick { border-color: #00a; background: #fff; box-shadow: inset 0 0 0 1px #00a; }
.cur .swatch { background: #f00; }
.lname { flex: 1; min-width: 0; height: 14px; padding-left: 2px; font-size: 12px; line-height: 14px; }
.silk { background: #fff; } .mask { background: #00a078; } .sig { background: #ffc84c; }
.drill { background: #96b2bc; } .rout { background: #d9d9d9; } .misc { background: var(--cy); }
.hand, .plus { position: absolute; right: 1px; top: 5px; }
.hand { right: 0; }
.selected { border: 1px solid #000; background: #ffc84c; height: 20px; margin-top: 5px; line-height: 18px; padding-left: 3px; font-size: 12px; }
.gauge { position: absolute; left: 2px; bottom: -9px; width: 8px; height: 59px; border: 1px solid #ffffff88; background: #ffffff33; display: flex; align-items: flex-end; z-index: 2; border-radius: 2px; }
.gauge i { width: 6px; height: 22px; background: #35d55c; }

.vs, .hs { display: flex; background: #45ab94; border: 2px solid; border-color: var(--td) var(--tl) var(--tl) var(--td); flex: none; }
.vs { width: 15px; flex-direction: column; }
.hs { height: 14px; }
.th { flex: 1; background: var(--te); border: 2px solid; border-color: var(--tl) var(--td) var(--td) var(--tl); }
.vs b { height: 11px; } .hs b { width: 12px; }
.vs b, .hs b { flex: none; background: linear-gradient(120deg, var(--tl) 35%, var(--te) 36%, var(--te) 60%, var(--td) 61%); }
.au { clip-path: polygon(50% 0, 100% 100%, 0 100%); } .ad { clip-path: polygon(0 0, 100% 0, 50% 100%); }
.al { clip-path: polygon(0 50%, 100% 0, 100% 100%); } .ar { clip-path: polygon(0 0, 100% 50%, 0 100%); }
.lvs .ad { margin-top: 36px; }

.canvas { flex: 1; min-width: 0; position: relative; overflow: hidden; }
.canvas svg { position: absolute; width: 100%; height: 100%; }

.right { width: 164px; background: #000; border-left: 2px solid var(--td); display: flex; flex-direction: column; }
.tools { display: grid; grid-template-columns: repeat(4, 38px); gap: 2px; padding: 2px 2px 1px 1px; border: solid var(--td); border-width: 0; border-bottom: 2px solid var(--tl); }
.low { border-bottom-color: #5c8a80; padding-top: 3px; }
.tool { height: 38px; border: 3px solid; background: var(--c); border-color: #fff8 #0007 #0007 #fff8; padding: 0; display: flex; }
.tool svg { width: 32px; height: 32px; border: 1px solid #000; }
.cy { --c: #9bdbdb; } .wh { --c: #fff; border-color: #ccc #999 #999 #ccc; } .gr { --c: #ccc; } .or { --c: #ffc650; }
.red { --c: #9bdbdb; border-color: #e02020 #a01818 #a01818 #e02020; }
.overview { flex: 1; min-height: 0; display: flex; align-items: center; margin-right: 2px; padding-top: 4px; border-bottom: 2px solid #5c8a80; }
.overview svg { width: 100%; border: 1px solid #3f7a20; }
.xy { background: var(--te); border: 2px solid; border-color: var(--tl) var(--te) var(--tl) var(--tl); height: 44px; padding: 7px 0 0; line-height: 15px; font-weight: 400; }

.cmdbar { height: 34px; margin-top: 1px; display: flex; background: #ffffcc; border-bottom: 2px solid #000; }
.cmd { width: 33px; border-right: 2px solid #000; padding: 4px 3px 2px; }
.cmd svg { width: 26px; height: 26px; padding: 2px; background: #ffffcc; border: 2px solid; border-color: #fff #b8b48c #b8b48c #fff; outline: 1px solid #000; outline-offset: -4px; }
.cmd path { fill: none; stroke: #000; }
.teal { width: 29px; background: var(--te); padding: 3px 1px 1px; border-right: 0; }
.xylabel { width: 48px; padding: 2px 0 0 2px; line-height: 32px; font-size: 12px; border-right: 2px solid #000; }
.coords { width: 171px; margin: 1px 2px; border: 3px solid; border-color: #99956b #e8e4b4 #e8e4b4 #99956b; background: #ffffcc; }
.prompt { font-size: 12px; line-height: 32px; padding: 2px 0 0 2px; border-left: 2px solid #000; }
.unitbox { width: 80px; border-left: 2px solid #000; background: var(--te); padding: 3px 3px 2px 5px; display: flex; }
.unitbox select { flex: 1; border-width: 2px; padding-left: 4px; }

.status { height: 32px; background: #b8ffff; border: 2px solid #678; border-width: 2px 2px 0; padding: 1px; }
.status div { height: 28px; border: 1px solid #000; border-left-color: #b8ffff; text-align: center; font-size: 12px; line-height: 26px; box-shadow: inset 0 -3px #669a9a, inset 3px 3px #dcffff; }

.taskbar { height: 40px; background: #1b2a2e; display: flex; align-items: center; color: #fff; font: 12px/20px "Open Sans", "Noto Sans CJK SC", sans-serif; }
.tb { width: 52px; height: 40px; display: flex; justify-content: center; align-items: center; flex: none; padding-top: 2px; }
.tb:first-child { width: 48px; }
.tasks { flex: 1; display: flex; gap: 8px; min-width: 0; padding-left: 1px; }
.task { width: 117px; flex: none; height: 40px; border-bottom: 2px solid #76b9ed; display: flex; align-items: center; padding: 3px 0 0 5px; gap: 4px; }
.task svg { flex: none; }
.task.active { width: 125px; margin: 0 -4px; background: #44565a; padding-left: 9px; }
.tray { display: flex; align-items: center; gap: 4px; padding: 2px 12px 0 0; }
.tray svg, .tico { width: 20px; height: 20px; }
.ime { width: 20px; text-align: center; font-size: 13px; }
.sg { margin-left: 4px; }
.clock { width: 62px; text-align: center; line-height: 17px; font-size: 12px; margin-right: 18px; }
.tico { margin-right: 20px; }
.edge { width: 1px; height: 40px; background: #5a6668; margin-right: 3px; }
.sogou { position: absolute; right: 12px; bottom: 41px; height: 26px; width: 178px; display: flex; align-items: center; background: linear-gradient(90deg, transparent 24px, #fff 24px); color: #1468d8; font: 700 14px/24px "Noto Sans CJK SC", sans-serif; }
.sogou span { width: 24px; text-align: center; }

.win { position: absolute; display: flex; flex-direction: column; box-shadow: 2px 4px 12px #0008; background: var(--te); }
.wtitle { height: 30px; flex: none; background: #fff; display: flex; align-items: center; padding-left: 8px; font: 12px/16px "Open Sans", sans-serif; border-bottom: 1px solid #000; }
.dim { color: #999; }
.wx { width: 28px; height: 28px; display: flex; align-items: center; justify-content: center; }
.wx path { fill: none; stroke: #111; } .dim .wx path { stroke: #888; }

.hist { left: 120px; top: 242px; width: 468px; height: 569px; border-right: 1px solid #134; }
.hbody { display: flex; padding: 4px 5px 0 4px; height: 292px; gap: 1px; }
.hleft { width: 104px; background: var(--cy); border: 1px solid #000; border-top-width: 2px; display: flex; flex-direction: column; }
.radios { border-right: 1px solid #000; border-bottom: 1px solid #000; height: 137px; padding-top: 1px; }
.radios label { display: flex; align-items: center; height: 27px; padding-left: 7px; gap: 6px; }
.radios input { width: 11px; height: 11px; transform: rotate(45deg); border: 2px solid; border-color: var(--cl) var(--cd) var(--cd) var(--cl); }
.radios input:checked { background: #c8004a; border-color: #688 var(--cl) var(--cl) #688; }
.pair { display: flex; gap: 4px; padding: 0 0 1px 2px; }
.sm { width: 30px; height: 30px; flex: none; }
.sm svg, .md svg, .ft svg { width: 100%; height: 100%; }
.sm rect, .md rect:first-child { fill: none; stroke: #000; }
.sm text { font: 400 11px "Liberation Serif", serif; text-anchor: middle; }
.sm circle { stroke: #000; }
.hright { flex: 1; display: flex; flex-direction: column; }
.chart { height: 222px; background: var(--cy); border: 1px solid #000; border-top: 2px solid #456; display: flex; flex-direction: column; box-shadow: 2px 0 var(--tl); }
.ctitle { align-self: center; margin-top: 3px; border: 1px solid #000; background: #b8ffff; padding: 4px 3px 1px; font-style: italic; line-height: 16px; box-shadow: 2px 2px #777; }
.bars { display: flex; padding: 0 13px 0 5px; border-bottom: 4px solid #000; align-items: flex-end; }
.bar { width: 55px; text-align: center; color: #d22; font-size: 14px; line-height: 13px; font-weight: 700; }
.bar.dk { color: #222; }
.bar i { display: block; background: #ff1a1a; border: 1px solid #000; border-bottom: 0; }
.bar .flat { background: #000; border: 0; }
.bins { display: flex; margin: 2px 13px 6px 5px; }
.bins div { width: 55px; height: 29px; border: 1px solid #000; background: #ff1a1a; font-size: 15px; line-height: 14px; padding: 3px 0 0 7px; font-weight: 400; color: #300; }
.bins div + div { border-left: 0; }
.bins span { padding-left: 10px; }
.hhs, .cyv { --te: #9bdbdb; --tl: #caf3f2; --td: #538585; background: #83b5b7; }
.hhs .th { flex: 0 0 133px; } .hhs .ar { margin-left: auto; }
.hlow { height: 67px; border: 2px solid #000; background: var(--cy); display: flex; box-shadow: 2px 0 var(--tl); }
.flist { width: 83px; padding: 4px 2px; border: 2px solid; border-color: var(--cd) var(--cl) var(--cl) var(--cd); }
.flist li { height: 16px; line-height: 16px; margin-bottom: 2px; width: 73px; }
.on { background: #000; color: var(--te); }
.flist .on { color: var(--cy); }
.cyv { margin-left: 4px; }
.res { flex: 1; border-left: 1px solid #000; display: flex; flex-direction: column; padding: 3px 3px 0; }
.res label { text-align: center; line-height: 18px; padding-right: 4px; }
.res output { padding-left: 10px; line-height: 24px; }
.res input { height: 15px; background: #83b5b7; border: 2px solid; border-color: var(--cd) var(--cl) var(--cl) var(--cd); padding-left: 8px; }
.res input::-webkit-slider-thumb { appearance: none; width: 30px; height: 11px; background: linear-gradient(90deg, var(--cy) 46%, var(--cd) 46%, var(--cd) 50%, var(--cl) 50%, var(--cl) 54%, var(--cy) 54%); border: 1px solid; border-color: var(--cl) var(--cd) var(--cd) var(--cl); }
.sash { height: 9px; display: flex; justify-content: flex-end; align-items: center; padding-right: 11px; background: linear-gradient(#2c7763, #2c7763) 0 4px / 100% 1px no-repeat, linear-gradient(#a4efdd, #a4efdd) 0 5px / 100% 1px no-repeat; }
.sash i { width: 9px; height: 8px; background: var(--te); border: 1px solid; border-color: var(--tl) var(--td) var(--td) var(--tl); }
.map { height: 164px; margin: 0 4px; padding-top: 2px; border: 2px solid; border-color: #223 var(--tl) #000 #223; display: flex; justify-content: center; align-items: center; background: var(--te); }
.mrow { display: flex; height: 43px; padding: 0 5px 0 6px; gap: 3px; align-items: center; }
.mrow .sm { height: 37px; }
.mtext { flex: 1; height: 41px; line-height: 40px; background: var(--cy); border: 1px solid #000; padding-left: 3px; }
.md { width: 38px; height: 37px; flex: none; }
.hclose { margin-top: auto; height: 28px; padding-top: 2px; }

.viewer { left: 1205px; top: 65px; width: 495px; bottom: 108px; border: 1px solid #355; }
.viewer .wtitle { height: 29px; padding-left: 7px; }
.vhead { height: 28px; flex: none; background: var(--te); border: 3px solid #caf3f2; border-top-width: 4px; box-shadow: inset -1px -2px var(--td); text-align: center; font: 700 14px/22px "Liberation Serif", serif; }
.vcols { flex: 1; min-height: 0; display: flex; border-top: 2px solid #000; border-bottom: 2px solid #000; }
.vl { width: 171px; flex: none; border-right: 2px solid #000; display: flex; flex-direction: column; }
.vlh { display: flex; height: 30px; justify-content: space-between; border-bottom: 1px solid #000; padding: 0 3px; }
.it { width: 46px; margin: 2px 0; padding-top: 1px; font-style: italic; font-weight: 400; border-width: 2px; }
.it:last-child { width: 39px; }
.lay { flex: 1; margin: 0 2px; background: var(--cy); border: 1px solid #000; border-width: 0 1px; text-align: center; font-style: italic; line-height: 30px; }
.lists { flex: 1; min-height: 0; display: flex; justify-content: space-between; }
.vlist { flex: 1; border-style: solid; border-width: 2px 3px 2px 2px; border-color: var(--td) var(--tl) var(--tl) var(--td); margin-right: 4px; padding: 2px 2px 2px 3px; overflow: hidden; }
.vlist li { height: 15px; line-height: 15px; margin-bottom: 3px; background: #000; color: var(--te); }
.lists .vs { width: 14px; }
.lhs { margin: 5px 18px 2px 1px; }
.repl { height: 32px; border: 1px solid #000; padding: 1px 1px 2px 6px; display: flex; }
.repl select { flex: 1; }
.vr { flex: 1; min-width: 0; display: flex; flex-direction: column; padding: 0 1px; }
.vrh { display: flex; height: 31px; background: var(--cy); margin-right: -1px; }
.cat { width: 207px; margin: 1px 0; font-style: italic; }
.vrh label { width: 53px; line-height: 31px; padding-left: 1px; }
.meas { flex: 1; margin: 1px 0; border-width: 2px; padding-top: 0; }
.clist { flex: 1; border-style: solid; border-width: 2px 3px 2px 2px; border-color: var(--td) var(--tl) var(--tl) var(--td); margin-right: 4px; padding: 4px 4px 0 2px; overflow: hidden; }
.clist li { height: 16px; line-height: 16px; margin-bottom: 2px; }
.rhs { margin: 4px 17px 2px 0; }
.nav { display: flex; height: 26px; gap: 3px; align-items: center; }
.nav button { height: 24px; border-width: 2px; padding: 2px 2px 0; }
.nav .def { height: 26px; outline: 2px solid #000; outline-offset: -2px; padding: 2px 3px 0; }
.nav label { margin-left: 3px; padding-top: 2px; }
.nav input { flex: 1; min-width: 0; height: 22px; margin-left: 4px; border: 2px solid; border-color: var(--td) var(--tl) var(--tl) var(--td); padding-left: 3px; background: var(--te); }
.zoomrow { display: flex; height: 32px; align-items: stretch; }
.zbox { width: 123px; border: 1px solid #000; border-right-width: 2px; padding: 1px 1px 1px 5px; display: flex; }
.zbox select { flex: 1; }
.sv { width: 28px; background: var(--cy); border: solid #000; border-width: 1px 0; line-height: 32px; padding-left: 1px; }
.gbox { width: 68px; border: 1px solid #000; border-left: 0; background: #2ecb3c; padding: 1px 1px 1px 5px; display: flex; }
.green { flex: 1; --cy: #1fe81f; --cl: #8cf78c; --cd: #188f18; }
.chk { display: flex; align-items: center; gap: 4px; padding: 0 0 3px 5px; }
.chk input { width: 13px; height: 13px; border: 2px solid; border-color: var(--tl) var(--td) var(--td) var(--tl); }
.acts { display: flex; justify-content: flex-end; gap: 4px; height: 35px; padding: 3px 1px 0 0; }
.acts .undo { width: 34px; }
.undo text { font-size: 9px; }
.meas-line { height: 20px; flex: none; line-height: 19px; padding-top: 1px; text-align: center; background: var(--te); border-bottom: 2px solid #000; }
.erf { height: 21px; flex: none; line-height: 19px; padding: 2px 0 0 1px; background: #ffffcc; border-bottom: 1px solid #000; }
.vfoot { display: flex; height: 34px; flex: none; gap: 5px; padding: 2px 1px; background: var(--cy); }
.vclose { flex: 1; padding-top: 2px; }
.ft { width: 29px; border-width: 2px; padding: 1px; flex: none; }
.ft svg { border: 1px solid #000; }
.hot { background: #e11; }
.hot svg { background: var(--cy); }
</style>
